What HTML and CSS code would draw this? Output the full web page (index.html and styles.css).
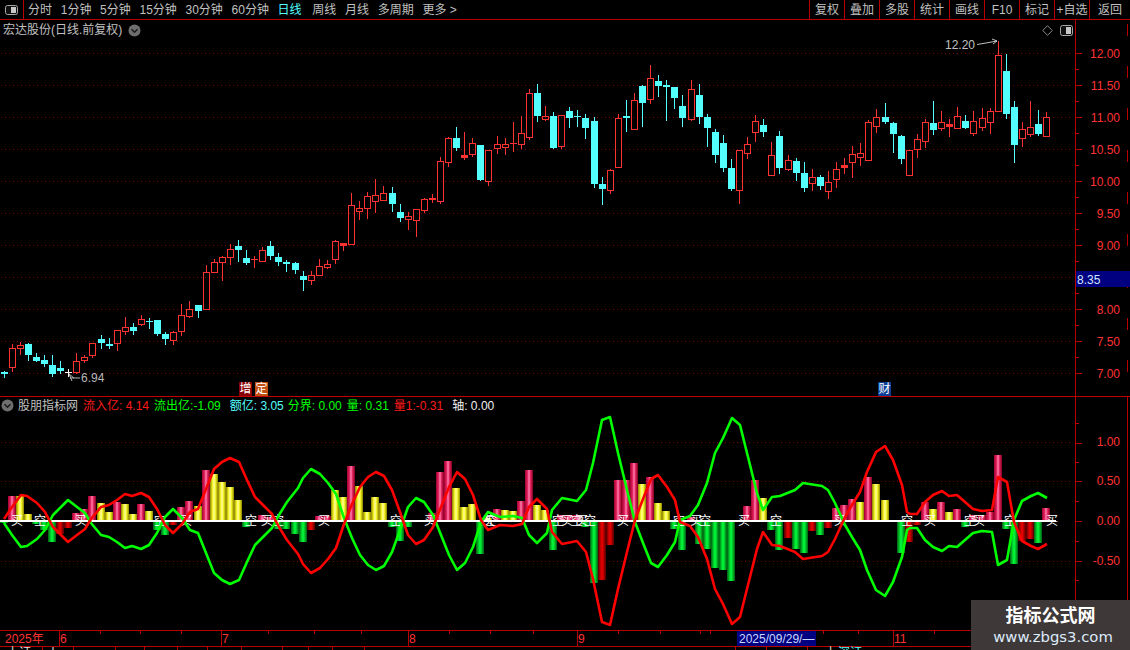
FILE: index.html
```html
<!DOCTYPE html>
<html lang="zh-CN">
<head>
<meta charset="utf-8">
<title>宏达股份 日线</title>
<link rel="stylesheet" href="styles.css">
</head>
<body>
<div class="screen">
  <header class="toolbar">
    <div class="layout-btn">
      <svg class="pane-icon" width="13" height="10" viewBox="0 0 13 10"><rect x="0.5" y="0.5" width="12" height="9" rx="2" fill="#111" stroke="#a8a8a8"/><rect x="6" y="2" width="5" height="6" fill="#c8c8c8"/></svg>
    </div>
    <nav class="periods">
      <span>分时</span><span>1分钟</span><span>5分钟</span><span>15分钟</span><span>30分钟</span><span>60分钟</span><span class="active">日线</span><span>周线</span><span>月线</span><span>多周期</span><span>更多 &gt;</span>
    </nav>
    <div class="actions">
      <span>复权</span><span>叠加</span><span>多股</span><span>统计</span><span>画线</span><span>F10</span><span>标记</span><span>+自选</span><span class="last">返回</span>
    </div>
  </header>

  <section class="price-panel">
    <svg id="price-chart" class="canvas" width="1130" height="376" viewBox="0 20 1130 376"></svg>
    <div class="panel-head">
      <span class="stock-name">宏达股份(日线.前复权)</span>
      <svg class="chev" width="13" height="13" viewBox="0 0 13 13"><circle cx="6.5" cy="6.5" r="6" fill="#6e6e6e"/><path d="M3.5 5.2 6.5 8.2 9.5 5.2" fill="none" stroke="#1c1c1c" stroke-width="1.6"/></svg>
    </div>
    <div class="panel-tools">
      <svg width="11" height="11" viewBox="0 0 11 11"><path d="M5.5 0.7 10.3 5.5 5.5 10.3 0.7 5.5Z" fill="none" stroke="#8a8a8a"/></svg>
      <svg width="13" height="11" viewBox="0 0 13 11"><rect x="0.5" y="0.5" width="12" height="10" rx="2" fill="#111" stroke="#a8a8a8"/><rect x="6" y="2" width="5" height="7" fill="#c8c8c8"/></svg>
    </div>
    <span class="event ev-zeng">增</span>
    <span class="event ev-ding">定</span>
    <span class="event ev-cai">财</span>
  </section>

  <section class="flow-panel">
    <svg id="flow-chart" class="canvas" width="1130" height="233" viewBox="0 397 1130 233"></svg>
    <div class="legend">
      <svg class="chev" width="13" height="13" viewBox="0 0 13 13"><circle cx="6.5" cy="6.5" r="6" fill="#6e6e6e"/><path d="M3.5 5.2 6.5 8.2 9.5 5.2" fill="none" stroke="#1c1c1c" stroke-width="1.6"/></svg>
      <span class="grey">股朋指标网</span>
      <span class="red">流入亿: 4.14</span>
      <span class="green wide-a">流出亿:-1.09</span>
      <span class="cyan">额亿: 3.05</span>
      <span class="green">分界: 0.00</span>
      <span class="green">量: 0.31</span>
      <span class="red wide-a">量1:-0.31</span>
      <span class="white">轴: 0.00</span>
    </div>
  </section>

  <svg id="timeline" class="timeline" width="1130" height="20" viewBox="0 630 1130 20"></svg>

  <aside class="watermark">
    <strong>指标公式网</strong>
    <span>www.zbgs3.com</span>
  </aside>
</div>
<script src="chart.js"></script>
</body>
</html>
```

FILE: styles.css
```css
* { box-sizing: border-box; }
html, body { margin: 0; padding: 0; background: #000; }
body {
  width: 1130px;
  height: 650px;
  overflow: hidden;
  font: 12px/16px "Liberation Sans", "Noto Sans CJK SC", sans-serif;
  color: #c0c0c0;
}
.screen { position: relative; width: 1130px; height: 650px; display: flex; flex-direction: column; overflow: hidden; }

.toolbar { display: flex; height: 20px; border-bottom: 1px solid #b80000; flex: none; }
.layout-btn { width: 24px; border-right: 1px solid #b80000; display: flex; align-items: center; justify-content: center; }
.periods { display: flex; gap: 8.7px; padding-left: 4px; align-items: center; flex: 1; white-space: nowrap; }
.periods .active { color: #54ffff; margin-right: 2px; }
.actions { display: flex; height: 19px; }
.actions span { width: 35px; border-left: 1px solid #b80000; display: flex; align-items: center; justify-content: center; white-space: nowrap; }
.actions .last { width: 41px; }

.price-panel { position: relative; height: 376px; flex: none; }
.flow-panel { position: relative; height: 234px; border-top: 1px solid #c00000; flex: none; }
.canvas { position: absolute; left: 0; top: 0; display: block; }
.panel-head { position: absolute; left: 3px; top: 2px; display: flex; align-items: center; gap: 6px; white-space: nowrap; }
.panel-tools { position: absolute; left: 1042px; top: 5px; display: flex; align-items: center; gap: 7px; }

.event { position: absolute; top: 362px; width: 13px; height: 14px; color: #fff; font-size: 12px; line-height: 14px; text-align: center; }
.ev-zeng { left: 239px; background: #8a0000; }
.ev-ding { left: 255px; background: #c0500f; }
.ev-cai { left: 878px; background: #0b3f96; }

.legend { position: absolute; left: 1px; top: 0; height: 17px; display: flex; align-items: center; gap: 5px; white-space: nowrap; }
.legend .chev { margin-right: -1px; }
.legend .wide-a { margin-right: 4px; }
.grey { color: #c0c0c0; }
.red { color: #ff1a1a; }
.green { color: #00ff00; }
.cyan { color: #54ffff; margin-right: -1px; }
.white { color: #f0f0f0; }

.timeline { display: block; flex: none; }

.watermark {
  position: absolute;
  left: 971px;
  top: 600px;
  width: 159px;
  height: 50px;
  background: #3f3838;
  display: flex;
  flex-direction: column;
  align-items: center;
  padding-top: 5px;
  color: #fff;
}
.watermark strong { font-size: 18px; line-height: 22px; font-weight: 700; }
.watermark span { font: 14.8px/20px "DejaVu Sans", sans-serif; color: #dcebfa; padding-left: 5px; }
```

FILE: chart.js
```js
// Candles: [colour, high, bodyTop, bodyBottom, low], in pixel rows of the chart.
var candles = [
['c',371,372,374,377],['r',344,348,367,371],['r',342,345,348,354],['c',343,344,355,360],['c',353,357,361,361],
['c',355,360,364,366],['c',355,365,374,376],['c',361,368,371,373],['w',369,372,372,376],['r',353,361,372,373],
['r',355,357,360,362],['r',343,343,355,357],['c',335,339,343,348],['c',338,344,346,348],['r',330,330,343,350],
['r',317,327,331,334],['c',323,327,331,334],['r',315,319,324,325],['c',318,321,322,328],['c',320,320,334,335],
['c',332,334,339,344],['r',331,332,340,344],['r',304,315,331,335],['r',301,309,316,317],['c',305,305,311,317],
['r',265,272,309,309],['r',259,262,272,272],['r',256,257,262,280],['r',244,249,257,264],['c',240,246,250,261],
['c',250,258,263,264],['r',256,259,259,267],['r',247,250,261,261],['c',241,246,256,259],['c',253,257,262,265],
['c',260,262,264,271],['c',262,263,270,273],['c',271,276,280,290],['r',271,275,280,284],['r',259,266,275,275],
['r',260,264,267,268],['r',240,241,259,263],['f',243,243,245,250],['r',193,205,244,244],['r',201,208,211,219],
['r',192,196,208,218],['r',179,195,201,212],['r',186,193,200,200],['c',187,193,204,211],['c',204,212,218,221],
['r',212,216,219,229],['r',209,209,220,236],['r',198,199,210,212],['f',194,198,199,202],['r',157,161,201,203],
['r',137,138,162,166],['c',127,138,148,150],['f',132,155,157,159],['r',138,143,154,156],['c',145,145,180,180],
['r',150,150,181,185],['r',136,144,148,153],['r',138,144,147,154],['r',122,143,143,151],['r',116,133,144,148],
['r',89,93,137,139],['c',84,93,116,121],['r',106,116,119,120],['c',112,116,148,148],['r',115,115,146,148],
['c',107,111,118,127],['c',110,116,117,126],['c',114,118,128,138],['c',117,121,184,187],['c',177,184,189,204],
['r',169,170,190,193],['r',114,118,167,167],['c',100,116,118,131],['r',93,100,129,129],['c',85,86,103,126],
['r',65,78,99,103],['c',75,81,86,96],['c',80,85,87,120],['c',87,87,98,108],['c',95,106,118,126],
['r',80,89,119,120],['c',84,95,117,123],['c',114,117,128,146],['c',129,132,155,162],['c',135,143,168,171],
['c',159,168,189,190],['r',150,150,190,203],['r',137,144,153,158],['r',115,121,132,141],['c',119,125,132,136],
['r',142,155,175,175],['c',131,136,168,173],['r',155,160,169,170],['c',158,161,173,180],['c',162,173,188,191],
['r',169,177,183,190],['c',175,177,186,189],['r',171,182,191,198],['r',162,169,179,187],['f',158,165,167,173],
['r',146,154,162,177],['r',143,153,157,165],['r',120,122,160,160],['r',109,117,126,132],['c',103,117,122,123],
['c',122,123,134,152],['c',135,136,159,163],['r',150,150,175,175],['r',134,139,149,157],['r',119,122,141,147],
['c',101,123,130,134],['r',111,122,128,130],['f',119,124,126,136],['r',107,116,128,128],['c',115,121,128,128],
['r',111,121,133,135],['r',108,118,127,130],['r',108,111,122,133],['r',41,55,111,111],['c',54,71,114,118],
['c',101,107,145,162],['r',122,129,138,146],['r',101,127,134,136],['c',110,124,134,135],['r',112,117,136,136]
];

// Flow bars, one per candle: [kind, far end row]; null leaves the slot empty.
var bars = [
['g',523],['p',496],['y',496],['y',514],['g',524],['g',530],['g',542],['d',534],['d',528],['p',513],
['p',509],['p',496],['y',503],['y',512],['p',502],['y',504],['y',514],['p',504],['y',511],['g',530],
['g',535],['d',525],['p',507],['p',501],['y',506],['p',470],['y',474],['y',482],['y',487],['y',500],
['g',527],null,['p',515],['p',517],['g',529],['g',529],['g',534],['g',542],['d',530],['p',516],
['p',516],['y',490],['y',497],['p',466],['y',486],['y',512],['y',497],['y',503],['g',527],['g',541],
['g',527],null,null,['p',513],['p',472],['p',461],['y',488],['y',507],['y',504],['g',554],
['y',518],['p',509],['y',510],['y',511],['p',501],['p',470],['y',505],['y',510],['g',550],['p',515],
['p',515],['p',515],['g',527],['g',583],['d',580],['d',545],['p',480],['p',480],['p',463],['y',484],
['p',477],['y',503],['y',511],['g',529],['g',550],['p',517],['g',544],['g',549],['g',568],['g',570],
['g',581],['p',520],['p',506],['p',480],['y',498],['g',530],['g',550],['d',538],['g',549],['g',553],
['d',531],['g',535],['d',528],['p',508],['p',505],['p',499],['y',502],['p',477],['y',484],['y',500],
null,['g',553],['d',542],['d',525],['p',502],['y',509],['p',502],['y',512],['p',509],['g',527],
['p',515],['p',515],['p',512],['p',455],['g',529],['g',564],['d',541],['d',539],['g',543],['p',508]
];

// The green line as [x, y]; the red line is its mirror about the zero row.
var green = [
[4,523],[12,535],[21,547],[27,546],[37,539],[45,530],[53,515],[61,507],[68,500],[77,507],[85,513],[91,523],
[101,535],[109,537],[117,542],[125,548],[132,546],[141,549],[149,545],[157,533],[165,517],[173,509],[182,518],
[190,530],[198,533],[206,553],[214,573],[222,580],[230,584],[239,580],[247,562],[255,545],[263,537],[272,528],
[279,515],[287,502],[298,488],[303,478],[311,469],[320,474],[328,483],[336,494],[344,518],[352,538],[360,555],
[368,565],[376,570],[384,566],[392,552],[400,530],[408,507],[416,498],[424,502],[433,515],[441,535],[449,555],
[457,570],[465,563],[473,547],[481,522],[488,512],[500,517],[513,516],[522,518],[529,535],[537,543],[547,533],
[552,510],[562,498],[577,501],[586,490],[593,463],[602,420],[610,417],[618,453],[627,490],[635,522],[643,543],
[651,563],[658,567],[667,555],[675,542],[680,520],[690,516],[698,505],[707,483],[715,453],[723,438],[732,418],
[740,425],[748,457],[757,493],[763,510],[772,497],[780,496],[795,490],[803,483],[822,486],[828,490],[835,503],
[845,525],[852,537],[860,550],[867,570],[876,590],[885,596],[893,582],[902,557],[907,530],[910,528],[917,528],
[925,540],[933,547],[942,551],[949,546],[957,547],[965,540],[973,533],[982,531],[992,532],[998,565],[1007,560],
[1014,520],[1022,501],[1031,496],[1038,493],[1047,498]
];

var marks = [
[17,'买'],[40,'空'],[81,'买'],[160,'空'],[186,'买'],[251,'空'],[267,'买'],[278,'空'],[324,'买'],[396,'空'],
[430,'买'],[489,'买'],[491,'空'],[558,'空'],[567,'买'],[577,'空'],[582,'买'],[590,'空'],[623,'买'],[679,'空'],
[696,'买'],[705,'空'],[744,'买'],[776,'空'],[840,'买'],[907,'空'],[930,'买'],[970,'空'],[979,'买'],[1010,'空'],[1052,'买']
];

var NS = 'http://www.w3.org/2000/svg';
var RED = '#ff3232', CYAN = '#54ffff', FRAME = '#b80000', DOT = '#7a0000';

function el(parent, name, attrs, text) {
  var node = document.createElementNS(NS, name);
  for (var k in attrs) node.setAttribute(k, attrs[k]);
  if (text !== undefined) node.textContent = text;
  parent.appendChild(node);
  return node;
}
function slot(i) { return 4 + 8 * i + Math.floor((i + 0.5) / 12.12); }
function rect(p, x, y, w, h, fill) { return el(p, 'rect', { x: x, y: y, width: w, height: h, fill: fill, 'shape-rendering': 'crispEdges' }); }
function dotted(p, y, x2) { el(p, 'line', { x1: 1, x2: x2, y1: y + 0.5, y2: y + 0.5, stroke: DOT, 'stroke-dasharray': '1 3', 'shape-rendering': 'crispEdges' }); }
function label(p, x, y, text, fill, anchor, size) {
  return el(p, 'text', { x: x, y: y, fill: fill, 'text-anchor': anchor || 'start', 'dominant-baseline': 'central', 'font-size': size || 12 }, text);
}

function drawPrice() {
  var svg = document.getElementById('price-chart');
  var prices = ['12.00','11.50','11.00','10.50','10.00','9.50','9.00','8.50','8.00','7.50','7.00'];
  prices.forEach(function (p, n) {
    var y = 53 + 32 * n;
    dotted(svg, y, 1072);
    rect(svg, 1075, y, 7, 1, FRAME);
    if (n < 10) rect(svg, 1075, y + 16, 4, 1, FRAME);
    label(svg, 1120, y + 1, p, RED, 'end');
  });
  rect(svg, 1075, 20, 1, 376, FRAME);
  for (var d = 24; d < 390; d += 42) rect(svg, 1127, d, 1, 12, FRAME);

  candles.forEach(function (c, i) {
    var x = slot(i), col = c[0], h = c[1], t = c[2], b = c[3], l = c[4];
    if (col === 'c' || col === 'w') {
      var fill = col === 'c' ? CYAN : '#ffffff';
      rect(svg, x, h, 1, l - h + 1, fill);
      rect(svg, x - 3, t, 7, Math.max(b - t, 1), fill);
    } else {
      rect(svg, x, h, 1, t - h, RED);
      rect(svg, x, b, 1, l - b + 1, RED);
      if (col === 'f' || b - t < 2) {
        rect(svg, x - 3, t, 7, b - t + 1, RED);
      } else {
        el(svg, 'rect', { x: x - 2.5, y: t + 0.5, width: 6, height: b - t, fill: 'none', stroke: RED, 'shape-rendering': 'crispEdges' });
      }
    }
  });

  label(svg, 945, 45, '12.20', '#c0c0c0');
  el(svg, 'path', { d: 'M977 44.5 986 43 997 41M992 39 997 41 993 44', fill: 'none', stroke: '#c0c0c0' });
  label(svg, 81, 378, '6.94', '#b8b8b8');
  el(svg, 'path', { d: 'M80 378H70M69 374 74 378M69 374 72 381', fill: 'none', stroke: '#b8b8b8' });

  rect(svg, 1076, 271, 54, 16, '#000080');
  label(svg, 1077, 279.5, '8.35', '#d0e8ff');
}

function drawFlow() {
  var svg = document.getElementById('flow-chart');
  var defs = el(svg, 'defs', {});
  var ramps = {
    p: ['#a00030', '#e0205a', '#ff80b0', '#e0205a', '#800020'],
    y: ['#8a8000', '#f0f020', '#ffffa0', '#f0f020', '#8a8000'],
    g: ['#005a10', '#00c828', '#00ff40', '#00c828', '#005a10'],
    d: ['#500000', '#b80000', '#f00000', '#b80000', '#500000']
  };
  var stops = [0, 0.3, 0.5, 0.7, 1];
  Object.keys(ramps).forEach(function (k) {
    var g = el(defs, 'linearGradient', { id: 'bar-' + k, x1: 0, x2: 1, y1: 0, y2: 0 });
    ramps[k].forEach(function (c, n) { el(g, 'stop', { offset: stops[n], 'stop-color': c }); });
  });

  [442, 481, 561].forEach(function (y) { dotted(svg, y, 1072); });
  bars.forEach(function (b, i) {
    if (!b) return;
    var x = slot(i) - 4, up = b[1] < 520;
    rect(svg, x, up ? b[1] : 522, 8, up ? 520 - b[1] : b[1] - 522, 'url(#bar-' + b[0] + ')');
  });
  rect(svg, 0, 520, 1056, 2, '#ffffff');
  marks.forEach(function (m) { label(svg, m[0], 521, m[1], '#ffffff', 'middle', 12); });

  var g = green.map(function (p) { return p[0] + ',' + p[1]; }).join(' ');
  var r = green.map(function (p) { return p[0] + ',' + (1042 - p[1]); }).join(' ');
  el(svg, 'polyline', { points: g, fill: 'none', stroke: '#00ff00', 'stroke-width': 2.6, 'stroke-linejoin': 'round' });
  el(svg, 'polyline', { points: r, fill: 'none', stroke: '#ff0000', 'stroke-width': 2.6, 'stroke-linejoin': 'round' });

  rect(svg, 1075, 397, 1, 233, FRAME);
  rect(svg, 1127, 397, 1, 233, FRAME);
  [[443, 7], [462, 4], [481, 7], [501, 4], [521, 7], [541, 4], [561, 7], [580, 4], [423, 4]].forEach(function (t) { rect(svg, 1075, t[0], t[1], 1, FRAME); });
  [['1.00', 442], ['0.50', 481], ['0.00', 521], ['-0.50', 561]].forEach(function (t) { label(svg, 1120, t[1], t[0], RED, 'end'); });
}

function drawTimeline() {
  var svg = document.getElementById('timeline');
  rect(svg, 0, 630, 1130, 1, FRAME);
  rect(svg, 0, 646, 1130, 1, FRAME);
  rect(svg, 1075, 630, 1, 16, FRAME);
  rect(svg, 1127, 630, 1, 16, FRAME);
  [100, 140, 181, 268, 314, 361, 449, 490, 533, 618, 660, 700, 710, 823, 858, 934].forEach(function (x) { rect(svg, x, 631, 1, 3, FRAME); });
  [[59, '6'], [221, '7'], [408, '8'], [577, '9'], [893, '11']].forEach(function (m) {
    rect(svg, m[0], 630, 1, 16, FRAME);
    label(svg, m[0] + 1, 639, m[1], RED);
  });
  label(svg, 5, 639, '2025年', RED);
  rect(svg, 737, 631, 79, 15, '#000080');
  label(svg, 739, 639, '2025/09/29/—', '#c8d8ff');
  [42, 73, 115, 144, 177, 207, 241, 282, 308, 332, 364, 735, 766, 807].forEach(function (x) { rect(svg, x, 647, 1, 3, FRAME); });
  label(svg, 7, 653, '上证', '#e0e0e0');
  label(svg, 48, 653, '卜', '#e0e0e0');
  label(svg, 825, 653, '上', '#e0e0e0');
  label(svg, 838, 653, '深证', CYAN);
}

drawPrice();
drawFlow();
drawTimeline();
```
